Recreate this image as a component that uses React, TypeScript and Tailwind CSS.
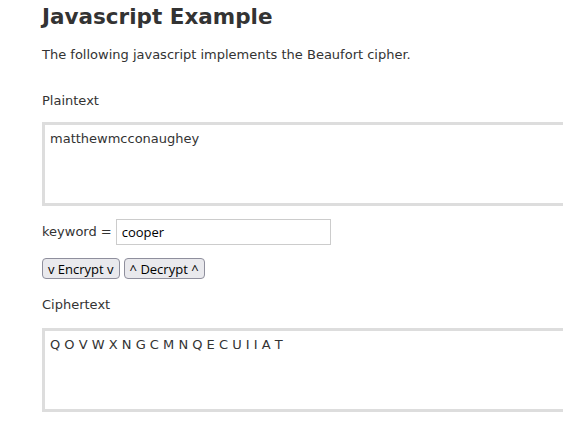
export default function App() {
  return (
    <div className="w-[563px] h-[430px] overflow-hidden bg-white text-[#333] font-['DejaVu_Sans',sans-serif]">
      <div className="pl-[42px]">
        <h1 className="pt-[4px] text-[21.5px] leading-[26px] font-bold text-[#333]">Javascript Example</h1>
        <p className="mt-[16px] text-[13px] leading-[18px]">The following javascript implements the Beaufort cipher.</p>
        <p className="mt-[28px] text-[13px] leading-[18px]">Plaintext</p>
        <textarea
          readOnly
          defaultValue="matthewmcconaughey"
          className="mt-[12px] block w-[560px] h-[84px] resize-none border-[3px] border-[#ddd] px-[5px] py-[5px] text-[13px] leading-[18px] text-[#333] font-['DejaVu_Sans',sans-serif] outline-none"
        />
        <div className="mt-[13px] flex items-center gap-[4px] text-[13px]">
          <span>keyword =</span>
          <input
            readOnly
            defaultValue="cooper"
            className="w-[215px] h-[26px] border border-[#ccc] px-[5px] text-[13px] text-black font-['Open_Sans',sans-serif] outline-none"
          />
        </div>
        <div className="mt-[13px] flex gap-[4px]">
          <button className="h-[21px] px-[5px] rounded-[4px] border border-[#8f8f9d] bg-[#e9e9ed] text-[13px] leading-[18px] text-black font-['Open_Sans',sans-serif]">v Encrypt v</button>
          <button className="h-[21px] px-[5px] rounded-[4px] border border-[#8f8f9d] bg-[#e9e9ed] text-[13px] leading-[18px] text-black font-['Open_Sans',sans-serif]">^ Decrypt ^</button>
        </div>
        <p className="mt-[17px] text-[13px] leading-[18px]">Ciphertext</p>
        <textarea
          readOnly
          defaultValue="Q O V W X N G C M N Q E C U I I A T"
          className="mt-[14px] block w-[560px] h-[84px] resize-none border-[3px] border-[#ddd] px-[5px] py-[5px] text-[13px] leading-[18px] text-[#333] font-['DejaVu_Sans',sans-serif] outline-none"
        />
      </div>
    </div>
  );
}
